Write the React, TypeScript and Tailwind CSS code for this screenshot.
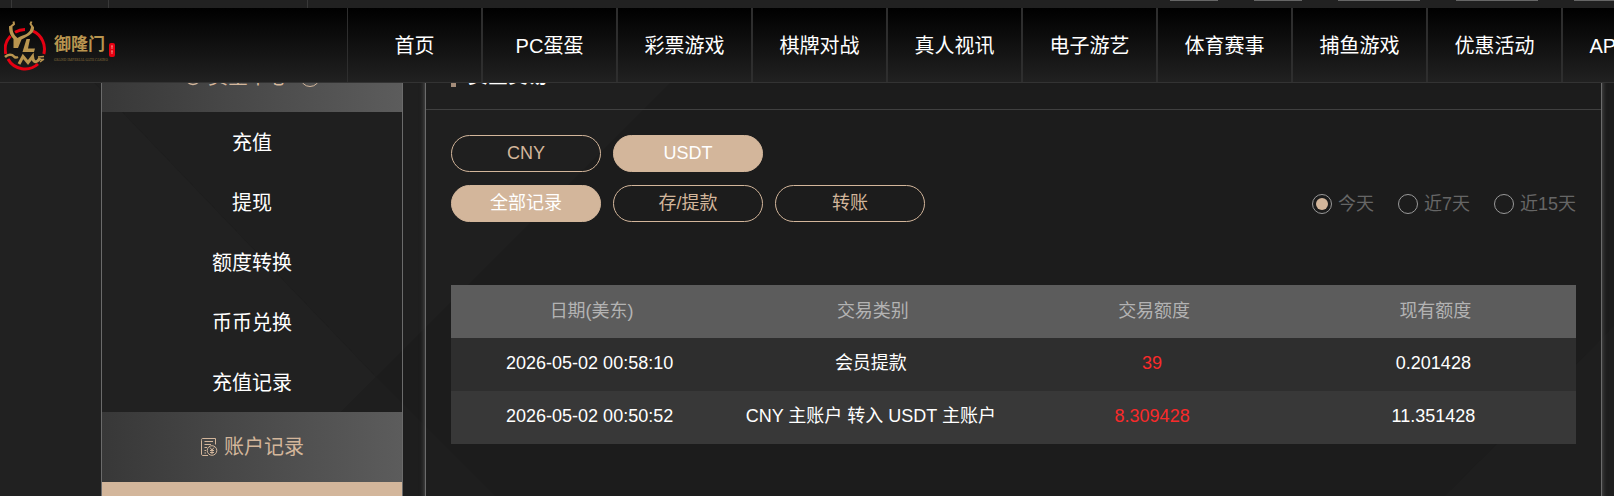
import { useState } from 'react';
import clsx from 'clsx';

const navItems = ['首页', 'PC蛋蛋', '彩票游戏', '棋牌对战', '真人视讯', '电子游艺', '体育赛事', '捕鱼游戏', '优惠活动', 'APP下载'];

const fundLinks = ['充值', '提现', '额度转换', '币币兑换', '充值记录'];

const currencies = ['CNY', 'USDT'];

const recordTypes = ['全部记录', '存/提款', '转账'];

const ranges = ['今天', '近7天', '近15天'];

const columns = ['日期(美东)', '交易类别', '交易额度', '现有额度'];

const records = [
  { date: '2026-05-02 00:58:10', type: '会员提款', amount: '39', balance: '0.201428' },
  { date: '2026-05-02 00:50:52', type: 'CNY 主账户 转入 USDT 主账户', amount: '8.309428', balance: '11.351428' },
];

function Backdrop() {
  return (
    <svg className="absolute inset-0 h-full w-full" viewBox="0 0 1614 496" preserveAspectRatio="xMinYMin slice" aria-hidden="true">
      <path d="M15 0H753L376 377Z" fill="#1f1f1f" />
      <path d="M0 0H15L376 377L257 496H0Z" fill="#212121" />
      <path d="M376 377L495 496H257Z" fill="#1e1e1e" />
      <path d="M1614 326V496H1445Z" fill="#1e1e1e" />
    </svg>
  );
}

function Logo() {
  return (
    <a href="#" className="flex items-center gap-2 pt-0.5 pl-1">
      <svg width="42" height="50" viewBox="0 0 42 50" fill="none">
        <g stroke="#e60012" strokeWidth="3">
          <path d="M11 11.3A19.500 19.500 0 0 1 21 8.500" />
          <path d="M29 10.200A19.500 19.500 0 0 1 39.800 33" />
          <path d="M6.500 15A19.500 19.500 0 0 0 1.800 33" />
          <path d="M4 38A19.500 19.500 0 0 0 34 43" />
        </g>
        {/* 龙角 */}
        <path d="M9.500 .5L10 3L6.500 6L7 9M27.500 .5L26.500 3L28.500 6L27.500 9" stroke="#b9954f" strokeWidth="2" />
        <path d="M5 5C5 11 6 14 9.500 18V27H14L17.500 18.500C26 14 30.500 12 30 6L27 5C27 10 24 12.500 20 14C17 15 15 16 13.500 17C10 14 8.500 11 8.500 6Z" fill="#b9954f" />
        <path d="M22.500 18H26L24 27.500H31L30 31H18.500Z" fill="#b9954f" />
        <g stroke="#b9954f">
          <path d="M1 36C4 33 8 33 10 35.500C11 37 12 37 14 36" strokeWidth="2.500" />
          <path d="M15 43L19 35.500L24 41.500L28.500 35.500C29 41 32 43 36 37" strokeWidth="3" />
          <path d="M34 36L40 35.500M36 41L40 38M35 38.500H40" strokeWidth="1.500" />
        </g>
      </svg>
      <span className="flex flex-col pt-1">
        <span className="flex items-end gap-1">
          <span className="text-[17px] leading-6 font-bold text-[#b9954f]">御隆门</span>
          <svg width="6" height="14" viewBox="0 0 6 14">
            <rect width="6" height="14" rx="2" fill="#e60012" />
            <path d="M2 3H4M3 3V6M2 8H4M3 8V11" stroke="#f08a80" />
          </svg>
        </span>
        <span className="font-serif text-[4px] leading-[6px] text-[#7d6638]">GRAND IMPERIAL GATE CASINO</span>
      </span>
    </a>
  );
}

function CoinIcon() {
  return (
    <svg width="18" height="18" viewBox="0 0 18 18" fill="none" stroke="currentColor" strokeWidth="1.5">
      <circle cx="9" cy="9" r="7.500" />
      <path d="M6 5L9 8.500L12 5M9 8.500V13M6 9H12M6 11H12" />
    </svg>
  );
}

function LedgerIcon() {
  return (
    <svg width="18" height="18" viewBox="0 0 18 18" fill="none" stroke="currentColor">
      <path d="M15.500 6.500V.5H2.500C1.500 .5 1.500 1.500 1.500 2.500V16C1.500 17 2 17.500 3 17.500H8" />
      <path d="M4.500 3.500H13M4.500 6.500H11M4.500 9.500H7M4.500 12.500H6M4.500 15H6" />
      <circle cx="12" cy="12.500" r="4.800" />
      <path d="M10 9.500L12 12L14 9.500M12 12V16M10 12.500H14M10 14.500H14" />
    </svg>
  );
}

interface PillProps {
  label: string;
  active: boolean;
  onClick: () => void;
}

function Pill({ label, active, onClick }: PillProps) {
  return (
    <button
      type="button"
      onClick={onClick}
      className={clsx(
        'h-[37px] w-[150px] rounded-full border border-[#d3b69b] pb-0.5 text-lg leading-6',
        active ? 'bg-[#d3b69b] text-white' : 'text-[#d3b69b]'
      )}
    >
      {label}
    </button>
  );
}

function Sidebar() {
  return (
    <aside className="flex w-[302px] shrink-0 flex-col border-x border-[#6b6b6b] text-xl">
      <h2 className="flex h-[70px] items-center justify-center bg-linear-to-r/srgb from-[#383838] to-[#5c5c5c] text-[#d3b69b]">
        <CoinIcon />
        <span className="mr-3 ml-1.5">资金中心</span>
        <span className="h-5 w-5 rounded-full border border-[#d3b69b]" />
      </h2>
      <nav className="flex flex-col">
        {fundLinks.map((link) => (
          <a key={link} href="#" className="flex h-[60px] items-center justify-center pt-0.5 text-white">
            {link}
          </a>
        ))}
      </nav>
      <h2 className="flex h-[70px] items-center justify-center gap-1.5 bg-linear-to-r/srgb from-[#383838] to-[#5c5c5c] text-[#d3b69b]">
        <LedgerIcon />
        账户记录
      </h2>
      <div className="h-[60px] bg-[#d3b69b]" />
    </aside>
  );
}

function Transactions() {
  const [currency, setCurrency] = useState('USDT');
  const [recordType, setRecordType] = useState('全部记录');
  const [range, setRange] = useState('今天');

  return (
    <main className="min-w-0 flex-1 border-x border-[#6b6b6b] shadow-[0_0_5px_#5c5c5c]">
      <div className="flex h-[68px] items-center gap-3 border-b border-[#404040] px-[25px]">
        <span className="h-[22px] w-[5px] bg-[#a38c79]" />
        <h1 className="text-xl font-bold text-white">资金交易</h1>
      </div>

      <div className="p-[25px]">
        <div className="flex gap-3">
          {currencies.map((c) => (
            <Pill key={c} label={c} active={c === currency} onClick={() => setCurrency(c)} />
          ))}
        </div>

        <div className="mt-[13px] flex items-center justify-between">
          <div className="flex gap-3">
            {recordTypes.map((t) => (
              <Pill key={t} label={t} active={t === recordType} onClick={() => setRecordType(t)} />
            ))}
          </div>
          <div className="flex gap-6">
            {ranges.map((r) => (
              <label key={r} className="flex items-center gap-1.5 text-lg leading-6 text-[#666]">
                <input
                  type="radio"
                  name="range"
                  checked={r === range}
                  onChange={() => setRange(r)}
                  className="h-5 w-5 appearance-none rounded-full border border-[#999] bg-clip-content p-[3px] checked:bg-[#d3b69b]"
                />
                {r}
              </label>
            ))}
          </div>
        </div>

        <table className="mt-[63px] w-full table-fixed text-center text-lg leading-6">
          <thead>
            <tr className="h-[53px] bg-[#5c5c5c] text-[#b3b3b3]">
              {columns.map((col) => (
                <th key={col} className="pb-0.5 font-normal">{col}</th>
              ))}
            </tr>
          </thead>
          <tbody>
            {records.map((r) => (
              <tr key={r.date} className="h-[53px] bg-[#2e2e2e] text-white even:bg-[#383838]">
                <td className="pr-1 pb-1">{r.date}</td>
                <td className="pr-1 pb-1">{r.type}</td>
                <td className="pr-1 pb-1 text-[#f92a2a]">{r.amount}</td>
                <td className="pr-1 pb-1">{r.balance}</td>
              </tr>
            ))}
          </tbody>
        </table>
      </div>
    </main>
  );
}

export default function App() {
  return (
    <div className="relative flex h-screen flex-col overflow-hidden bg-[#1c1c1c] font-['Liberation_Sans','Noto_Sans_CJK_SC',sans-serif]">
      <Backdrop />

      {/* 顶部工具条 */}
      <div className="relative z-10 flex h-2 shrink-0 justify-between overflow-hidden bg-[#212121]">
        <div className="flex">
          <span className="w-3 border-r border-[#383838]" />
          <span className="w-[97px] border-r border-[#383838]" />
          <span className="w-[199px] border-r border-[#383838]" />
        </div>
        <div className="flex gap-9">
          <span className="h-px w-12 bg-[#666]" />
          <span className="h-px w-12 bg-[#666]" />
          <span className="h-px w-[82px] bg-[#666]" />
          <span className="h-px w-[82px] bg-[#666]" />
          <span className="h-px w-10 bg-[#666]" />
        </div>
      </div>

      {/* 主导航 */}
      <header className="relative z-10 flex h-[75px] shrink-0 overflow-hidden border-b border-[#333] bg-linear-to-b/srgb from-black to-[#212121]">
        <div className="flex w-[347px] shrink-0 items-center">
          <Logo />
        </div>
        <nav className="flex">
          {navItems.map((item) => (
            <a
              key={item}
              href="#"
              className="flex w-[135px] shrink-0 items-center justify-center border-x border-[#2e2e2e] pt-0.5 text-xl text-white"
            >
              {item}
            </a>
          ))}
        </nav>
      </header>

      <div className="relative -mt-[41px] flex min-h-[600px] gap-[22px] pr-3 pl-[101px]">
        <Sidebar />
        <Transactions />
      </div>
    </div>
  );
}
